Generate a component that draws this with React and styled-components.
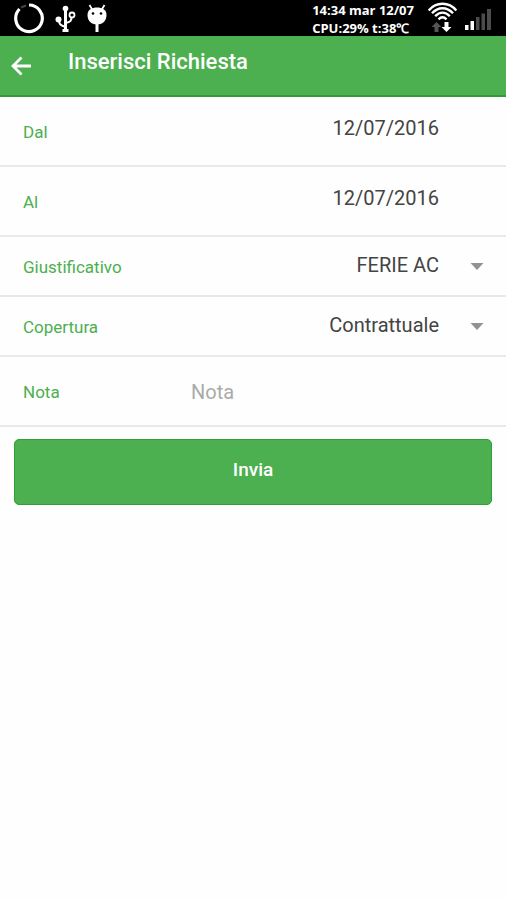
import React from "react";
import styled, { createGlobalStyle } from "styled-components";

const GlobalStyle = createGlobalStyle`
  *, *::before, *::after { box-sizing: border-box; }
  body {
    margin: 0;
    background: #fefefe;
    color: #444;
    font-family: Roboto, "Liberation Sans", sans-serif;
  }
`;

const StatusBar = styled.div`
  display: flex;
  align-items: center;
  justify-content: space-between;
  height: 36px;
  padding: 0 14px;
  background: #000;
  color: #fff;
`;

const StatusGroup = styled.div`
  display: flex;
  align-items: center;
  gap: ${(p) => p.$gap}px;
`;

const Icon = styled.svg`
  display: block;
  flex: none;
`;

const Clock = styled.div`
  margin-right: 8px;
  padding-top: 2px;
  font: 700 13px/18px "Open Sans", sans-serif;
  white-space: nowrap;
`;

const Header = styled.header`
  display: flex;
  align-items: center;
  gap: 32px;
  height: 61px;
  padding: 0 8px;
  border-bottom: 2px solid #2f9e38;
  background: #4caf50;
  color: #fff;
`;

const BackButton = styled.button`
  padding: 0;
  border: 0;
  background: none;
  color: inherit;
  cursor: pointer;
`;

const Title = styled.h1`
  margin: 0;
  padding-bottom: 8px;
  font-size: 22px;
  font-weight: 500;
  line-height: 28px;
`;

const Row = styled.div`
  display: grid;
  grid-template-columns: 160px 1fr;
  align-items: center;
  column-gap: 8px;
  height: ${(p) => (p.$compact ? 60 : 70)}px;
  padding: 2px 22px 0 23px;
  border-bottom: 2px solid #e9e9e9;
`;

const Label = styled.label`
  color: #4caf50;
  font-size: 17px;
  line-height: 24px;
`;

const Field = styled.input`
  width: 100%;
  min-width: 0;
  padding: ${(p) => (p.$value ? "0 45px 8px 0" : "0")};
  border: 0;
  outline: 0;
  background: none;
  color: inherit;
  font: 400 20px/24px Roboto, sans-serif;
  text-align: ${(p) => (p.$value ? "right" : "left")};
  &::placeholder { color: #aaa; opacity: 1; }
`;

const SelectBox = styled.div`
  display: flex;
  align-items: center;
`;

const Select = styled.select`
  flex: 1;
  min-width: 0;
  margin-right: -14px;
  padding: 0 45px 4px 0;
  border: 0;
  outline: 0;
  appearance: none;
  background: none;
  color: inherit;
  font: 400 20px/24px Roboto, sans-serif;
  text-align: right;
  text-align-last: right;
`;

const Submit = styled.button`
  display: block;
  width: calc(100% - 28px);
  height: 66px;
  margin: 12px 14px;
  padding: 0 0 4px;
  border: 1px solid #2fa038;
  border-radius: 5px;
  background: #4caf50;
  color: #fff;
  font: 500 19px/24px Roboto, sans-serif;
  cursor: pointer;
`;

function LoaderIcon() {
  return (
    <Icon width="30" height="34" viewBox="0 0 30 34" fill="none" stroke="#fff" strokeWidth="3.2">
      <path d="M15 4A13.300 13.300 0 1 1 5.500 8" />
      <path d="M7 6.500 12 4.500" stroke="#444" strokeWidth="2" />
    </Icon>
  );
}

function UsbIcon() {
  return (
    <Icon width="21" height="28" viewBox="0 0 21 28" fill="none" stroke="#fff" strokeWidth="2">
      <path d="M10.500 3v23M10.500 23C5 21 4 20 4 16M10.500 19c5-1 6-2 6-6" />
      <path d="M10.500 5v20" strokeWidth="3" />
      <circle cx="10.500" cy="4.500" r="2.800" fill="#fff" stroke="none" />
      <circle cx="3.500" cy="15.500" r="3" fill="#fff" stroke="none" />
      <circle cx="17" cy="11" r="2.500" strokeWidth="1.800" />
      <path d="M7.500 26.500h6" strokeWidth="3" />
    </Icon>
  );
}

function DroidIcon() {
  return (
    <Icon width="20" height="30" viewBox="0 0 20 30" fill="#fff">
      <path d="m2.500 2 3 5m12-5-3 5" stroke="#fff" strokeWidth="1.800" />
      <path d="M.500 12C.500 6.500 5 4.500 10 4.500s9.500 2 9.500 7.500c0 5-3 8.500-7 9.200h-5C3.500 20.500.500 17 .500 12Z" />
      <path d="M10 20v9" stroke="#fff" strokeWidth="3" />
      <circle cx="6" cy="10.500" r="1.300" fill="#000" />
      <circle cx="14" cy="10.500" r="1.300" fill="#000" />
    </Icon>
  );
}

function WifiIcon() {
  return (
    <Icon width="30" height="32" viewBox="0 0 30 32" fill="none" stroke="#fff" strokeWidth="2.400">
      <path d="M.700 8.500C8-.500 21-.500 28.300 8.500M4 11.300c6-6.800 15-6.800 21 0M7.200 14.200c4.500-4.800 10.100-4.800 14.600 0M10.500 17.300c2.800-2.800 5.200-2.800 8 0" />
      <path d="m3.500 25 5-5 5 5h-3v5h-4v-5Z" fill="#555" stroke="none" />
      <path d="m13.500 25 5 5 5-5h-3v-5h-4v5Z" fill="#fff" stroke="none" />
    </Icon>
  );
}

function SignalIcon() {
  return (
    <Icon width="28" height="24" viewBox="0 0 28 24">
      <path d="M1 19h3.500v5H1ZM6.500 15H10v9H6.500Z" fill="#fff" />
      <path d="M12 11h3.500v13H12ZM17.500 7.500H21V24h-3.500ZM23 3h4v21h-4Z" fill="#4c4c4c" />
    </Icon>
  );
}

function Caret() {
  return (
    <Icon width="14" height="10" viewBox="0 0 14 10" aria-hidden="true">
      <path d="M.500 1h13L7 8Z" fill="#929292" />
    </Icon>
  );
}

function DateRow({ id, label }) {
  return (
    <Row>
      <Label htmlFor={id}>{label}</Label>
      <Field id={id} $value defaultValue="12/07/2016" />
    </Row>
  );
}

function SelectRow({ id, label, value }) {
  return (
    <Row $compact>
      <Label htmlFor={id}>{label}</Label>
      <SelectBox>
        <Select id={id} defaultValue={value}>
          <option value={value}>{value}</option>
        </Select>
        <Caret />
      </SelectBox>
    </Row>
  );
}

export default function App() {
  return (
    <>
      <GlobalStyle />
      <StatusBar>
        <StatusGroup $gap={11}>
          <LoaderIcon />
          <UsbIcon />
          <DroidIcon />
        </StatusGroup>
        <StatusGroup $gap={6}>
          <Clock>
            14:34 mar 12/07
            <br />
            CPU:29% t:38℃
          </Clock>
          <WifiIcon />
          <SignalIcon />
        </StatusGroup>
      </StatusBar>
      <Header>
        <BackButton type="button" aria-label="Indietro">
          <Icon width="28" height="28" viewBox="0 0 28 28" fill="none" stroke="#fff" strokeWidth="2.800">
            <path d="M23 14H6M13.500 5.500 5 14l8.500 8.500" />
          </Icon>
        </BackButton>
        <Title>Inserisci Richiesta</Title>
      </Header>
      <form onSubmit={(e) => e.preventDefault()}>
        <DateRow id="dal" label="Dal" />
        <DateRow id="al" label="Al" />
        <SelectRow id="giustificativo" label="Giustificativo" value="FERIE AC" />
        <SelectRow id="copertura" label="Copertura" value="Contrattuale" />
        <Row>
          <Label htmlFor="nota">Nota</Label>
          <Field id="nota" placeholder="Nota" />
        </Row>
        <Submit type="submit">Invia</Submit>
      </form>
    </>
  );
}
